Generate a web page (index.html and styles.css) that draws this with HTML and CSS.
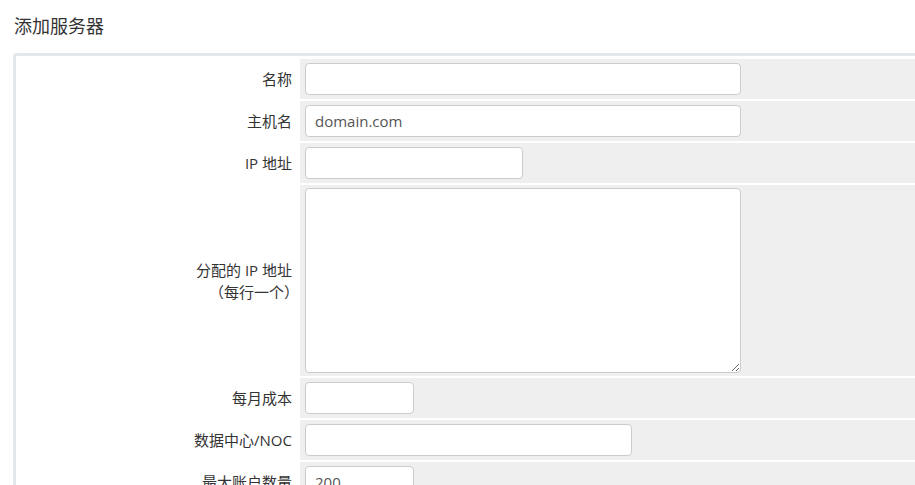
FILE: index.html
```html
<!DOCTYPE html>
<html lang="zh">
<head>
<meta charset="utf-8">
<title>添加服务器</title>
<link rel="stylesheet" href="styles.css">
</head>
<body>
<div class="page">
  <h1 class="title">添加服务器</h1>
  <div class="box">
    <table class="form">
      <tr>
        <td class="label">名称</td>
        <td class="field"><input class="input w-lg" type="text" value=""></td>
      </tr>
      <tr>
        <td class="label">主机名</td>
        <td class="field"><input class="input w-lg" type="text" value="domain.com"></td>
      </tr>
      <tr>
        <td class="label">IP 地址</td>
        <td class="field"><input class="input w-md" type="text" value=""></td>
      </tr>
      <tr>
        <td class="label">分配的 IP 地址<br><span class="note">（每行一个）</span></td>
        <td class="field field-tall"><textarea class="input textarea w-lg"></textarea></td>
      </tr>
      <tr>
        <td class="label">每月成本</td>
        <td class="field"><input class="input w-sm" type="text" value=""></td>
      </tr>
      <tr>
        <td class="label">数据中心/NOC</td>
        <td class="field"><input class="input w-ml" type="text" value=""></td>
      </tr>
      <tr>
        <td class="label">最大账户数量</td>
        <td class="field"><input class="input w-sm" type="text" value="200"></td>
      </tr>
    </table>
  </div>
</div>
</body>
</html>
```

FILE: styles.css
```css
html, body {
  margin: 0;
  padding: 0;
  background: #fff;
}

body {
  font-family: "Open Sans", "Noto Sans CJK SC", sans-serif;
  font-size: 15px;
  color: #333;
  overflow: hidden;
}

.page {
  padding-left: 13px;
  overflow: hidden;
  height: 485px;
}

.title {
  margin: 14px 0 15px 1px;
  font-size: 18px;
  line-height: 24px;
  font-weight: normal;
  color: #333;
}

.box {
  width: 960px;
  border: 3px solid #e3e7e9;
  border-radius: 4px;
  padding: 1px 0 0 1px;
  background: #fff;
}

.form {
  border-collapse: separate;
  border-spacing: 2px;
  width: 100%;
  margin: 0;
}

.form td {
  padding: 0;
}

.label {
  width: 273px;
  height: 40px;
  padding: 0 6px 0 0 !important;
  text-align: right;
  vertical-align: middle;
  background: #fff;
  line-height: 22px;
  white-space: nowrap;
}

.note {
  margin-right: -7px;
}

.field {
  background: #efefef;
  vertical-align: middle;
  padding: 4px 5px !important;
}

.field-tall {
  padding: 3px 5px 3px !important;
}

.input {
  display: block;
  box-sizing: border-box;
  height: 32px;
  margin: 0;
  padding: 0 9px;
  border: 1px solid #cccccc;
  border-radius: 4px;
  background: #fff;
  font-family: "Open Sans", "Noto Sans CJK SC", sans-serif;
  font-size: 15px;
  color: #555;
  outline: none;
}

.textarea {
  height: 185px;
  padding: 6px 9px;
  resize: both;
}

.w-lg { width: 436px; }
.w-ml { width: 327px; }
.w-md { width: 218px; }
.w-sm { width: 109px; }
```
